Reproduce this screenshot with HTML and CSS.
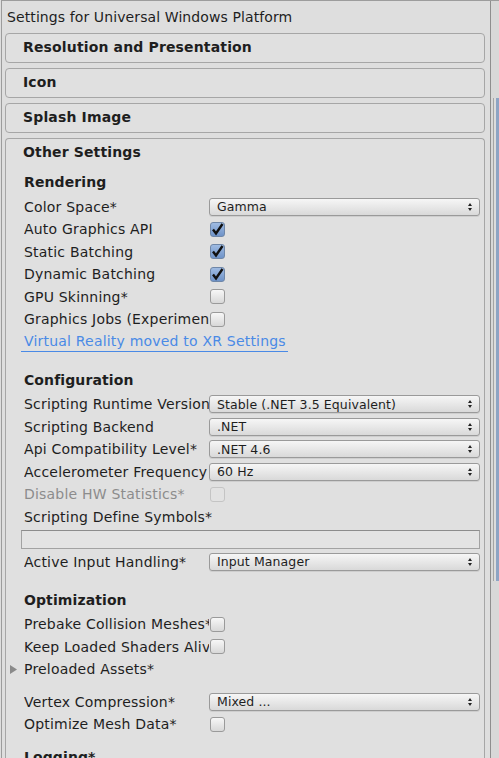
FILE: index.html
```html
<!DOCTYPE html>
<html lang="en">
<head>
    <meta charset="UTF-8">
    <meta name="viewport" content="width=device-width, initial-scale=1.0">
    <title>Player Settings</title>
    <link rel="stylesheet" href="styles.css">
</head>
<body>
    <div class="window">
        <div class="inspector">
            <div class="title">Settings for Universal Windows Platform</div>

            <!-- Collapsed sections -->
            <div class="foldout"><div class="foldout-head">Resolution and Presentation</div></div>
            <div class="foldout"><div class="foldout-head">Icon</div></div>
            <div class="foldout"><div class="foldout-head">Splash Image</div></div>

            <!-- Expanded section -->
            <div class="foldout open">
                <div class="foldout-head">Other Settings</div>
                <div class="foldout-body">

                    <div class="group-title first">Rendering</div>
                    <div class="row">
                        <span class="label">Color Space*</span>
                        <div class="popup"><span>Gamma</span><svg class="arrows" width="4" height="8" viewBox="0 0 4 8"><path d="M0 3L2 0L4 3ZM0 5L2 8L4 5Z"/></svg></div>
                    </div>
                    <div class="row">
                        <span class="label">Auto Graphics API</span>
                        <span class="check on"><svg width="15" height="15" viewBox="0 0 15 15"><path d="M3 7.5L6 11.5L12.5 2" /></svg></span>
                    </div>
                    <div class="row">
                        <span class="label">Static Batching</span>
                        <span class="check on"><svg width="15" height="15" viewBox="0 0 15 15"><path d="M3 7.5L6 11.5L12.5 2" /></svg></span>
                    </div>
                    <div class="row">
                        <span class="label">Dynamic Batching</span>
                        <span class="check on"><svg width="15" height="15" viewBox="0 0 15 15"><path d="M3 7.5L6 11.5L12.5 2" /></svg></span>
                    </div>
                    <div class="row">
                        <span class="label">GPU Skinning*</span>
                        <span class="check"></span>
                    </div>
                    <div class="row">
                        <span class="label">Graphics Jobs (Experimental)*</span>
                        <span class="check"></span>
                    </div>
                    <div class="row">
                        <span class="link">Virtual Reality moved to XR Settings</span>
                    </div>

                    <div class="group-title">Configuration</div>
                    <div class="row">
                        <span class="label">Scripting Runtime Version*</span>
                        <div class="popup"><span>Stable (.NET 3.5 Equivalent)</span><svg class="arrows" width="4" height="8" viewBox="0 0 4 8"><path d="M0 3L2 0L4 3ZM0 5L2 8L4 5Z"/></svg></div>
                    </div>
                    <div class="row">
                        <span class="label">Scripting Backend</span>
                        <div class="popup"><span>.NET</span><svg class="arrows" width="4" height="8" viewBox="0 0 4 8"><path d="M0 3L2 0L4 3ZM0 5L2 8L4 5Z"/></svg></div>
                    </div>
                    <div class="row">
                        <span class="label">Api Compatibility Level*</span>
                        <div class="popup"><span>.NET 4.6</span><svg class="arrows" width="4" height="8" viewBox="0 0 4 8"><path d="M0 3L2 0L4 3ZM0 5L2 8L4 5Z"/></svg></div>
                    </div>
                    <div class="row">
                        <span class="label">Accelerometer Frequency</span>
                        <div class="popup"><span>60 Hz</span><svg class="arrows" width="4" height="8" viewBox="0 0 4 8"><path d="M0 3L2 0L4 3ZM0 5L2 8L4 5Z"/></svg></div>
                    </div>
                    <div class="row disabled">
                        <span class="label">Disable HW Statistics*</span>
                        <span class="check"></span>
                    </div>
                    <div class="row">
                        <span class="label wide">Scripting Define Symbols*</span>
                    </div>
                    <div class="row">
                        <div class="text-field"></div>
                    </div>
                    <div class="row">
                        <span class="label">Active Input Handling*</span>
                        <div class="popup"><span>Input Manager</span><svg class="arrows" width="4" height="8" viewBox="0 0 4 8"><path d="M0 3L2 0L4 3ZM0 5L2 8L4 5Z"/></svg></div>
                    </div>

                    <div class="group-title">Optimization</div>
                    <div class="row">
                        <span class="label">Prebake Collision Meshes*</span>
                        <span class="check"></span>
                    </div>
                    <div class="row">
                        <span class="label">Keep Loaded Shaders Alive*</span>
                        <span class="check"></span>
                    </div>
                    <div class="row">
                        <svg class="expander" width="7" height="9" viewBox="0 0 7 9"><path d="M0 0L7 4.5L0 9Z"/></svg>
                        <span class="label wide">Preloaded Assets*</span>
                    </div>
                    <div class="row spaced">
                        <span class="label">Vertex Compression*</span>
                        <div class="popup"><span>Mixed ...</span><svg class="arrows" width="4" height="8" viewBox="0 0 4 8"><path d="M0 3L2 0L4 3ZM0 5L2 8L4 5Z"/></svg></div>
                    </div>
                    <div class="row">
                        <span class="label">Optimize Mesh Data*</span>
                        <span class="check"></span>
                    </div>

                    <div class="group-title logging">Logging*</div>
                </div>
            </div>
        </div>

        <div class="scrollbar">
            <div class="thumb"></div>
        </div>
    </div>
</body>
</html>
```

FILE: styles.css
```css
/* Light editor skin */
:root {
    --bg-color: #dedede;
    --frame-line: #9c9c9c;
    --box-line: #a6a6a6;
    --text-color: #1e1e1e;
    --disabled-text: #8c8c8c;
    --link-color: #4a8ae6;
    --thumb-color: #8ea4c4;
}

* {
    box-sizing: border-box;
}

html,
body {
    margin: 0;
    padding: 0;
    height: 100%;
    overflow: hidden;
}

body {
    font-family: 'DejaVu Sans', Verdana, sans-serif;
    font-size: 14px;
    letter-spacing: 0.2px;
    color: var(--text-color);
    background-color: var(--bg-color);
}

.window {
    display: flex;
    height: 100%;
    margin-left: 1px;
    border-top: 1px solid var(--frame-line);
}

.inspector {
    width: 490px;
    flex-shrink: 0;
    border-left: 1px solid var(--frame-line);
    border-right: 1px solid #8e8e8e;
}

.title {
    height: 32px;
    line-height: 32px;
    padding-left: 5px;
    letter-spacing: 0.1px;
    white-space: nowrap;
}

/* Section boxes */
.foldout {
    width: 480px;
    margin: 0 0 5px 3px;
    border: 1px solid var(--box-line);
    border-radius: 4px;
    background-color: #e0e0e0;
}

.foldout.open {
    margin-bottom: 0;
    border-bottom: none;
    border-radius: 4px 4px 0 0;
}

.foldout-head {
    height: 28px;
    line-height: 27px;
    padding-left: 17px;
    font-weight: bold;
    letter-spacing: 0.15px;
    white-space: nowrap;
}

.foldout-body {
    padding: 0 4px 20px 18px;
}

.group-title {
    height: 24px;
    line-height: 24px;
    margin: 14.5px 0 1.5px;
    font-weight: bold;
    letter-spacing: 0.1px;
}

.group-title.first {
    margin-top: 3px;
}

.group-title.logging {
    margin-top: 9.5px;
}

/* Property rows */
.row {
    display: flex;
    align-items: center;
    height: 22.5px;
    position: relative;
}

.row.spaced {
    margin-top: 9.75px;
}

.label {
    width: 185px;
    flex-shrink: 0;
    overflow: hidden;
    white-space: nowrap;
    line-height: 22px;
}

.label.wide {
    width: auto;
}

.disabled .label {
    color: var(--disabled-text);
}

.popup {
    flex: 1;
    display: flex;
    align-items: center;
    justify-content: space-between;
    height: 18px;
    padding: 0 7px 0 7px;
    font-size: 12.5px;
    letter-spacing: 0.1px;
    border: 1px solid #9a9a9a;
    border-radius: 3px;
    background: linear-gradient(#f6f6f6, #d9d9d9);
    box-shadow: 0 1px 0 rgba(0, 0, 0, 0.08);
    white-space: nowrap;
}

.arrows {
    fill: #222;
}

.check {
    width: 15px;
    height: 15px;
    margin-left: 1px;
    border: 1px solid #9a9a9a;
    border-radius: 3px;
    background: linear-gradient(#f7f7f7, #d8d8d8);
}

.check svg {
    display: block;
    margin: -1px 0 0 -1px;
    fill: none;
    stroke: #111;
    stroke-width: 2.4;
}

.check.on {
    border-color: #6f87a8;
    background: linear-gradient(#9fbbe2, #6f93c8);
}

.disabled .check {
    border-color: #c4c4c4;
    background: #e2e2e2;
}

.link {
    margin-left: -3px;
    padding: 0 2px 1px 3px;
    color: var(--link-color);
    border-bottom: 1px solid var(--link-color);
    line-height: 17px;
    margin-top: 1px;
    white-space: nowrap;
}

.text-field {
    flex: 1;
    height: 19px;
    margin-left: -3px;
    border: 1px solid #a2a2a2;
    border-top-color: #8c8c8c;
    background-color: #e3e3e3;
}

.expander {
    position: absolute;
    left: -14px;
    top: 7px;
    fill: #8a8a8a;
}

/* Scroll track */
.scrollbar {
    flex: 1;
    display: flex;
    justify-content: flex-end;
    padding-top: 97px;
    background-color: #d8d8d8;
}

.thumb {
    width: 3px;
    height: 483px;
    margin-left: 1px;
    background-color: var(--thumb-color);
    box-shadow: -2px 0 0 #dcdcdc, -3px 0 0 #a4a4a4;
}
```
